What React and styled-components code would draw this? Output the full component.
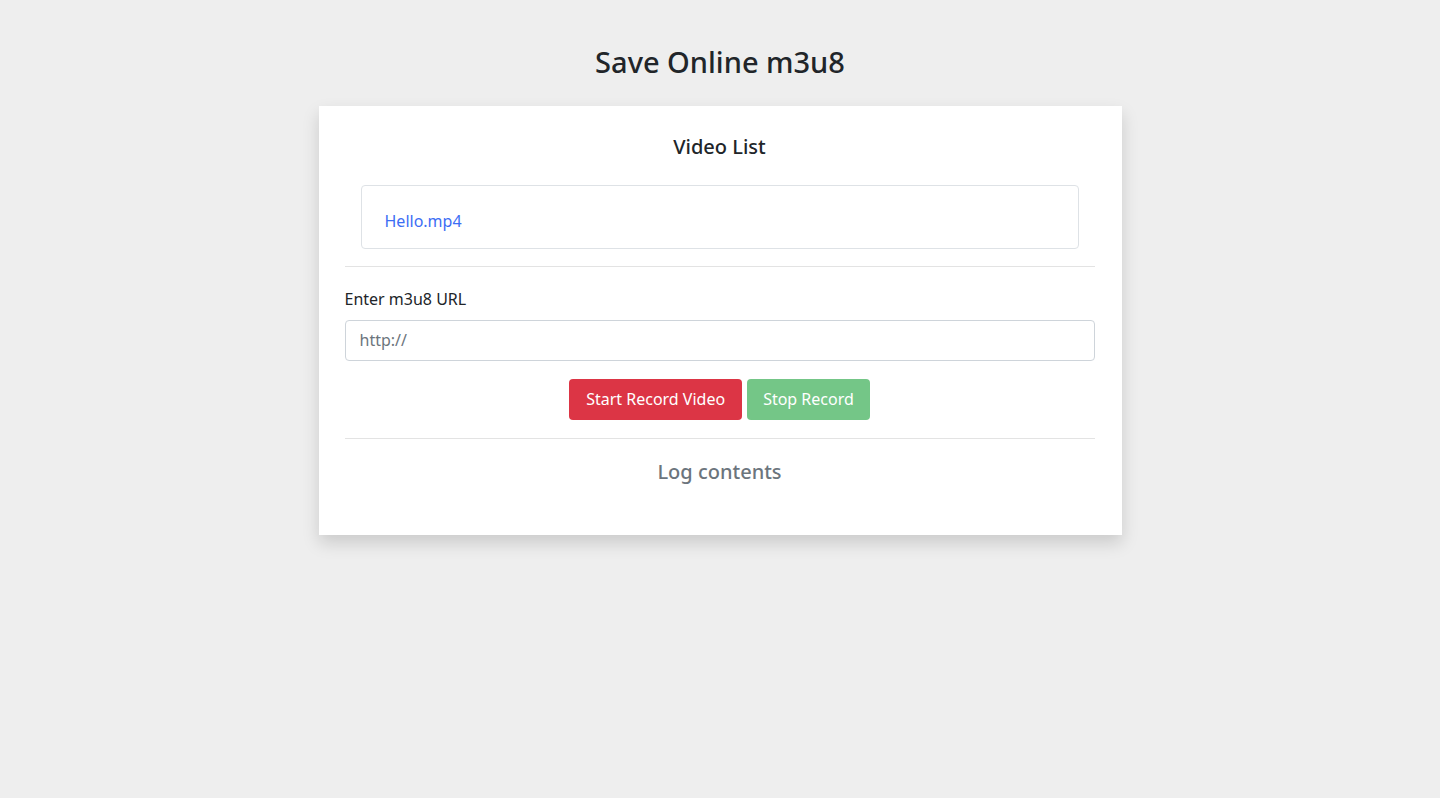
import React from "react";
import styled, { createGlobalStyle } from "styled-components";

const GlobalStyle = createGlobalStyle`
  * { box-sizing: border-box; }
  body {
    margin: 0;
    background: #eeeeee;
    font-family: "Noto Sans", "Open Sans", sans-serif;
    color: #212529;
  }
`;

const Page = styled.div`
  display: flex;
  flex-direction: column;
  align-items: center;
  padding-top: 45px;
  min-height: 798px;
`;

const Title = styled.h1`
  margin: 0 0 26px;
  font-size: 29px;
  font-weight: 500;
  line-height: 1.2;
`;

const Card = styled.div`
  width: 803px;
  background: #fff;
  padding: 29px 27px 51px 26px;
  box-shadow: 0 8px 16px rgba(0, 0, 0, 0.15);
`;

const Heading = styled.h4`
  margin: 0 0 ${p => (p.$muted ? 0 : 26)}px;
  text-align: center;
  font-size: 20px;
  font-weight: 500;
  line-height: 1.2;
  color: ${p => (p.$muted ? "#6c757d" : "#212529")};
`;

const VideoList = styled.ul`
  list-style: none;
  margin: 0 16px;
  padding: 23px 23px 15px;
  border: 1px solid #dee2e6;
  border-radius: 4px;
`;

const VideoLink = styled.a`
  color: #3c6ef4;
  text-decoration: none;
  font-size: 16px;
  line-height: 24px;
`;

const Divider = styled.hr`
  margin: ${p => p.$top}px 0 ${p => p.$bottom}px;
  border: 0;
  border-top: 1px solid #e3e3e3;
`;

const Label = styled.label`
  display: block;
  font-size: 16px;
  line-height: 24px;
  margin-bottom: 9px;
`;

const Input = styled.input`
  display: block;
  width: 100%;
  height: 41px;
  padding: 0 14px;
  font: inherit;
  font-size: 16px;
  border: 1px solid #ced4da;
  border-radius: 4px;
  color: #495057;
  &::placeholder { color: #6c757d; }
`;

const Actions = styled.div`
  display: flex;
  justify-content: center;
  gap: 5px;
  margin-top: 18px;
`;

const Button = styled.button`
  height: 41px;
  padding: 0 ${p => p.$pad}px;
  font: inherit;
  font-size: 16px;
  color: #fff;
  border: 0;
  border-radius: 4px;
  background: ${p => p.$bg};
`;

const App = () => (
  <>
    <GlobalStyle />
    <Page>
      <Title>Save Online m3u8</Title>
      <Card>
        <Heading>Video List</Heading>
        <VideoList>
          <li>
            <VideoLink href="#">Hello.mp4</VideoLink>
          </li>
        </VideoList>
        <Divider $top={17} $bottom={20} />
        <Label>Enter m3u8 URL</Label>
        <Input placeholder="http://" />
        <Actions>
          <Button $bg="#dc3545" $pad={17}>Start Record Video</Button>
          <Button $bg="#74c687" $pad={16} disabled>Stop Record</Button>
        </Actions>
        <Divider $top={18} $bottom={21} />
        <Heading $muted>Log contents</Heading>
      </Card>
    </Page>
  </>
);

export default App;
